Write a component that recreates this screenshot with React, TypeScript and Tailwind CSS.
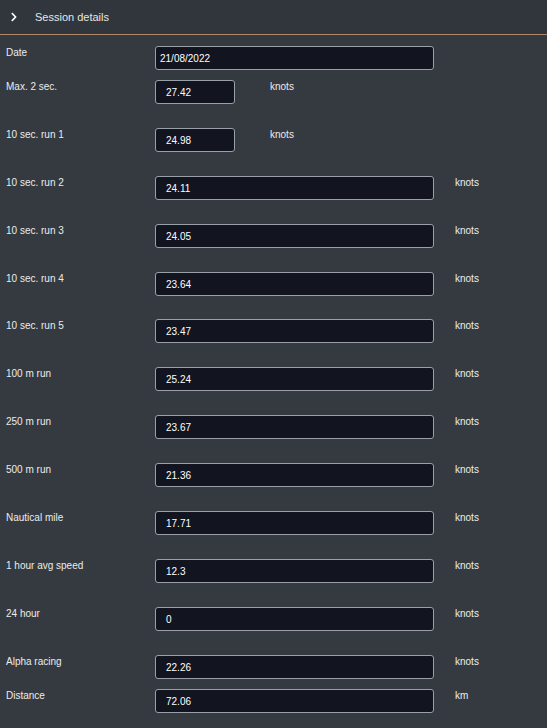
import { FaChevronRight } from 'react-icons/fa';

interface Field {
  label: string;
  value: string;
  unit?: string;
  narrow?: boolean;
  gap: string;
  pad: string;
}

const fields: Field[] = [
  { label: 'Date', value: '21/08/2022', gap: 'mb-[10px]', pad: 'pl-[4px]' },
  { label: 'Max. 2 sec.', value: '27.42', unit: 'knots', narrow: true, gap: 'mb-[24px]', pad: 'pl-[10px]' },
  { label: '10 sec. run 1', value: '24.98', unit: 'knots', narrow: true, gap: 'mb-[24px]', pad: 'pl-[10px]' },
  { label: '10 sec. run 2', value: '24.11', unit: 'knots', gap: 'mb-[24px]', pad: 'pl-[10px]' },
  { label: '10 sec. run 3', value: '24.05', unit: 'knots', gap: 'mb-[24px]', pad: 'pl-[10px]' },
  { label: '10 sec. run 4', value: '23.64', unit: 'knots', gap: 'mb-[23px]', pad: 'pl-[10px]' },
  { label: '10 sec. run 5', value: '23.47', unit: 'knots', gap: 'mb-[24px]', pad: 'pl-[10px]' },
  { label: '100 m run', value: '25.24', unit: 'knots', gap: 'mb-[24px]', pad: 'pl-[10px]' },
  { label: '250 m run', value: '23.67', unit: 'knots', gap: 'mb-[24px]', pad: 'pl-[10px]' },
  { label: '500 m run', value: '21.36', unit: 'knots', gap: 'mb-[24px]', pad: 'pl-[10px]' },
  { label: 'Nautical mile', value: '17.71', unit: 'knots', gap: 'mb-[24px]', pad: 'pl-[10px]' },
  { label: '1 hour avg speed', value: '12.3', unit: 'knots', gap: 'mb-[24px]', pad: 'pl-[10px]' },
  { label: '24 hour', value: '0', unit: 'knots', gap: 'mb-[24px]', pad: 'pl-[10px]' },
  { label: 'Alpha racing', value: '22.26', unit: 'knots', gap: 'mb-[10px]', pad: 'pl-[10px]' },
  { label: 'Distance', value: '72.06', unit: 'km', gap: 'mb-0', pad: 'pl-[10px]' },
];

export default function App() {
  return (
    <div
      className="min-h-screen w-[547px] bg-[#343a40] text-[#ececec]"
      style={{ fontFamily: '"Liberation Sans", Arial, sans-serif' }}
    >
      <div className="flex h-[34px] items-center bg-[#31363c] pl-[9px]">
        <FaChevronRight className="text-white" size={10} />
        <span className="ml-[16px] text-[11px] text-[#e6e6e6]">Session details</span>
      </div>
      <div className="h-[1px] bg-[#b08769]" />

      <div className="pt-[11px]">
        {fields.map((f) => (
          <div key={f.label} className={`flex items-start ${f.gap}`}>
            <div className="w-[155px] shrink-0 pl-[6px] pt-[1px] text-[10px] leading-[12px]">
              {f.label}
            </div>
            <div
              className={`flex h-[24px] items-center rounded-[3px] border border-[#9aa0a8] bg-[#12151f] text-[10px] text-white ${f.pad} ${
                f.narrow ? 'w-[80px]' : 'w-[279px]'
              }`}
            >
              {f.value}
            </div>
            {f.unit && (
              <div
                className={`pt-[1px] text-[10px] leading-[12px] ${
                  f.narrow ? 'ml-[35px]' : 'ml-[21px]'
                }`}
              >
                {f.unit}
              </div>
            )}
          </div>
        ))}
      </div>
    </div>
  );
}
